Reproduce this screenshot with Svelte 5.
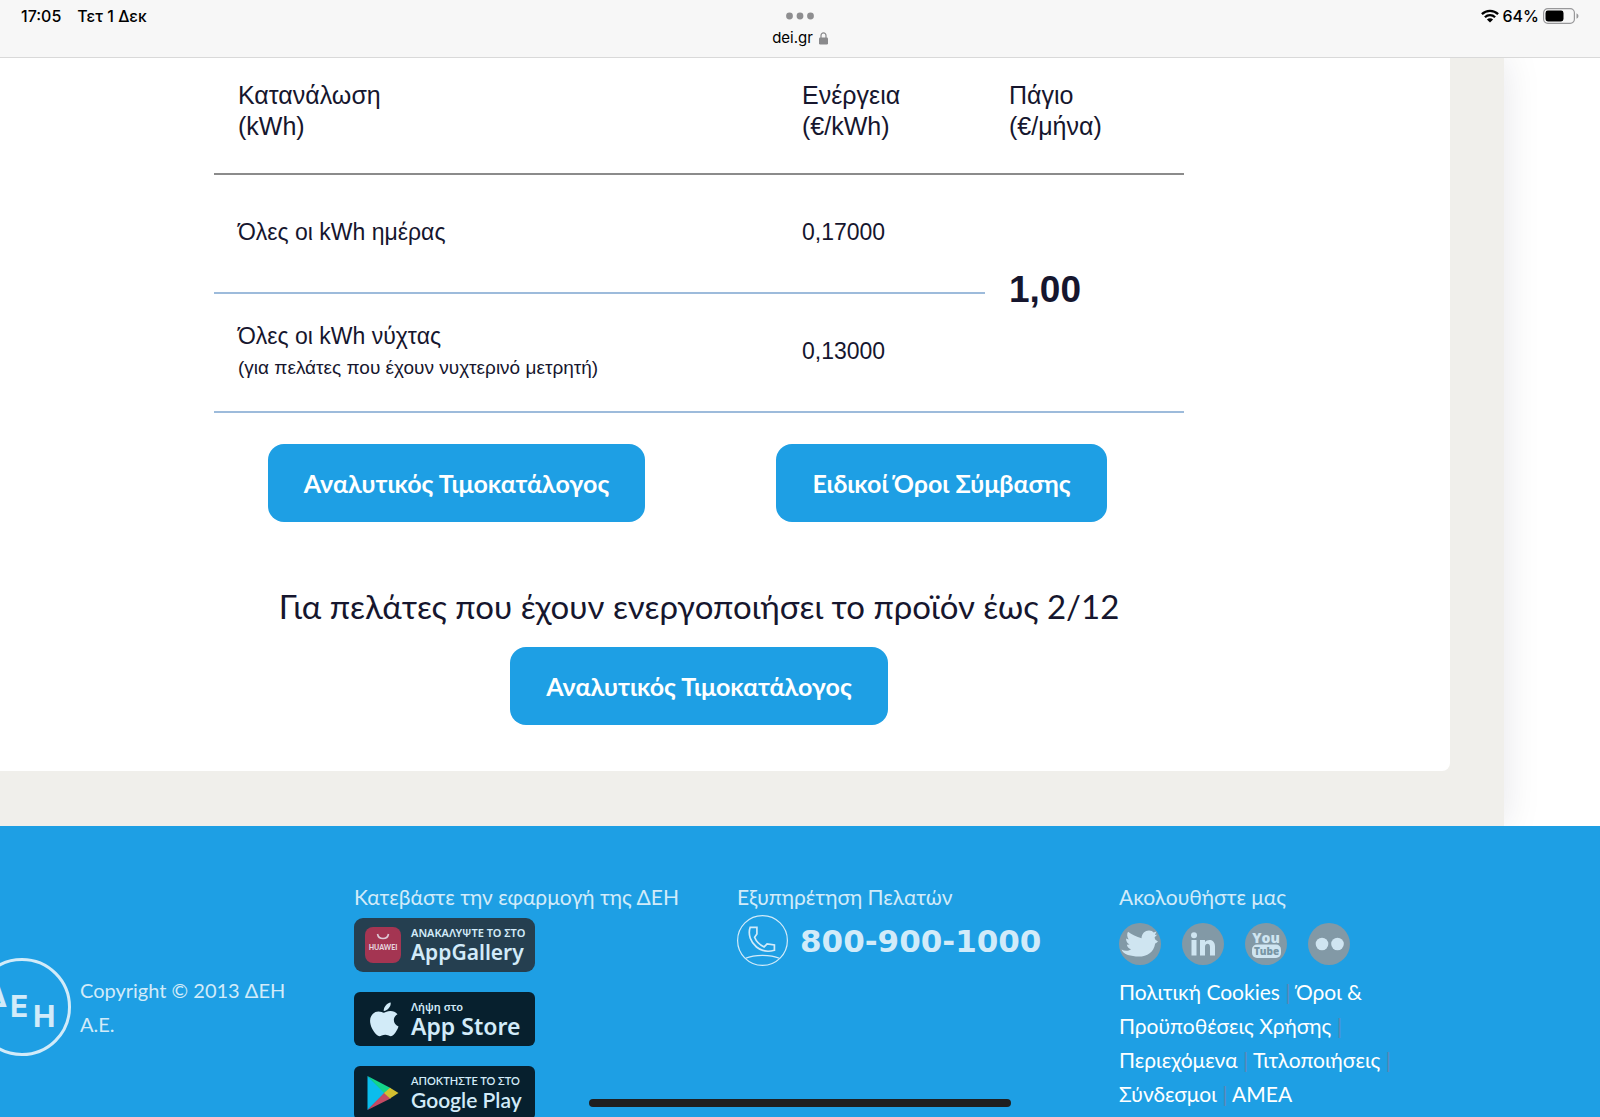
<script lang="ts">
	interface FooterLink {
		label: string;
		href: string;
	}

	const rates = [
		{ label: "Όλες οι kWh ημέρας", note: "", price: "0,17000" },
		{
			label: "Όλες οι kWh νύχτας",
			note: "(για πελάτες που έχουν νυχτερινό μετρητή)",
			price: "0,13000",
		},
	];

	const links: FooterLink[] = [
		{ label: "Πολιτική Cookies", href: "#cookies" },
		{ label: "Όροι & Προϋποθέσεις Χρήσης", href: "#terms" },
		{ label: "Περιεχόμενα", href: "#contents" },
		{ label: "Τιτλοποιήσεις", href: "#securitisation" },
		{ label: "Σύνδεσμοι", href: "#links" },
		{ label: "ΑΜΕΑ", href: "#accessibility" },
	];
</script>

<div class="screen">
	<header class="status-bar">
		<div class="clock">
			<span>17:05</span>
			<span>Τετ 1 Δεκ</span>
		</div>
		<div class="address">
			<svg class="dots" width="28" height="8" viewBox="0 0 28 8">
				<circle cx="3.5" cy="4" r="3.4" />
				<circle cx="14" cy="4" r="3.4" />
				<circle cx="24.5" cy="4" r="3.4" />
			</svg>
			<div class="host">
				<span>dei.gr</span>
				<svg width="9" height="13" viewBox="0 0 9 13">
					<path d="M2 6V3.4a2.5 2.5 0 0 1 5 0V6" fill="none" stroke="#8a8a8c" stroke-width="1.2" />
					<rect x="0" y="5.5" width="9" height="7" rx="1.2" fill="#8a8a8c" />
				</svg>
			</div>
		</div>
		<div class="indicators">
			<svg width="18" height="14" viewBox="0 0 18 14">
				<g fill="none" stroke="#000" stroke-width="2.3">
					<path d="M.9 5.1a11.6 11.6 0 0 1 16.2 0" />
					<path d="M3.9 8.3a7.3 7.3 0 0 1 10.2 0" />
				</g>
				<path d="M9 13.6 5.9 10.5a4.4 4.4 0 0 1 6.2 0z" />
			</svg>
			<span>64%</span>
			<svg width="36" height="16" viewBox="0 0 36 16">
				<rect x=".6" y=".6" width="30.8" height="14.8" rx="4.2" fill="none" stroke="#98989a" stroke-width="1.2" />
				<rect x="2.5" y="2.5" width="18" height="11" rx="2.4" />
				<path d="M33.5 5.2q2 .9 2 2.8t-2 2.8z" fill="#98989a" />
			</svg>
		</div>
	</header>

	<div class="page">
		<main class="sheet">
			<section class="card">
				<table>
					<thead>
						<tr>
							<th>Κατανάλωση<br />(kWh)</th>
							<th class="energy">Ενέργεια<br />(€/kWh)</th>
							<th class="fixed">Πάγιο<br />(€/μήνα)</th>
						</tr>
					</thead>
					<tbody>
						{#each rates as rate, i}
							<tr>
								<td>
									{rate.label}
									{#if rate.note}<small>{rate.note}</small>{/if}
								</td>
								<td>{rate.price}</td>
								{#if i === 0}
									<td class="total" rowspan={rates.length}>1,00</td>
								{/if}
							</tr>
						{/each}
					</tbody>
				</table>

				<div class="actions">
					<a class="btn" href="#pricelist">Αναλυτικός Τιμοκατάλογος</a>
					<a class="btn" href="#contract">Ειδικοί Όροι Σύμβασης</a>
				</div>

				<h2>Για πελάτες που έχουν ενεργοποιήσει το προϊόν έως 2/12</h2>
				<div class="previous">
					<a class="btn" href="#pricelist-old">Αναλυτικός Τιμοκατάλογος</a>
				</div>
			</section>
		</main>

		<footer>
			<div class="brand">
				<svg class="logo" width="100" height="100" viewBox="0 0 100 100">
					<circle cx="50" cy="50" r="47.5" fill="none" stroke="currentColor" stroke-width="3" />
					<g class="logo-text">
						<text x="13" y="50">Δ</text>
						<text x="38" y="60">Ε</text>
						<text x="61" y="70">Η</text>
					</g>
				</svg>
				<p>Copyright © 2013 ΔΕΗ Α.Ε.</p>
			</div>

			<div class="apps">
				<h3>Κατεβάστε την εφαρμογή της ΔΕΗ</h3>
				<a class="badge gallery" href="#appgallery">
					<svg width="36" height="36" viewBox="0 0 36 36">
						<rect width="36" height="36" rx="8" fill="#a43552" />
						<path d="M12.5 7a5.6 5.6 0 0 0 11 0" fill="none" stroke="#dfc9d5" stroke-width="1.6" />
						<text x="18" y="23" text-anchor="middle">HUAWEI</text>
					</svg>
					<span class="badge-text">
						<span class="small">ΑΝΑΚΑΛΥΨΤΕ ΤΟ ΣΤΟ</span>
						<span class="store">AppGallery</span>
					</span>
				</a>
				<a class="badge apple" href="#appstore">
					<svg width="36" height="36" viewBox="0 0 36 36">
						<g fill="#d2ebf8">
							<path d="M18.7 9.9c-.2-3.8 3.3-7.9 7-8.4.5 4-3 8.2-7 8.4z" />
							<path d="M32.5 13.2c-5.3 2.9-4.7 10.1 1 12.2-.9 2.7-2.7 6.1-4.9 8.4-1.5 1.6-3.2 1.6-4.9.8-2.5-1.2-4.5-1.2-7 0-1.9.9-3.5.8-5.1-.8C5.3 27.5 2.7 17.9 7.7 12.9c2.6-2.7 6.1-3.1 9-1.8 1.5.7 2.6.7 4.1 0 4.1-1.8 8.7-1.3 11.7 2.1z" />
						</g>
					</svg>
					<span class="badge-text">
						<span class="small">Λήψη στο</span>
						<span class="store">App Store</span>
					</span>
				</a>
				<a class="badge play" href="#googleplay">
					<svg width="36" height="36" viewBox="0 0 36 36">
						<path d="M2.5 1v34L20 18z" fill="#0bbdec" />
						<path d="M2.5 1 26 13.2 20 19z" fill="#14d58b" />
						<path d="M2.5 35 26 23.3 20 17z" fill="#c54a64" />
						<path d="m25 12.7 8.5 5.3-8.5 5.6L19 18z" fill="#d3bf30" />
					</svg>
					<span class="badge-text">
						<span class="small">ΑΠΟΚΤΗΣΤΕ ΤΟ ΣΤΟ</span>
						<span class="store">Google Play</span>
					</span>
				</a>
			</div>

			<div class="service">
				<h3>Εξυπηρέτηση Πελατών</h3>
				<a class="phone" href="tel:8009001000">
					<svg width="51" height="51" viewBox="0 0 51 51">
						<g fill="none" stroke="currentColor">
							<circle cx="25.5" cy="25.5" r="24.9" stroke-width="1.2" />
							<path d="M8.5 43.3c9-4 25-4 34 0" stroke-width="1.2" />
							<path d="M13.2 12.3h6.7V19l-2.3 3.3c1.4 3.6 5.4 7.8 9.5 9.6l3-2.9 7.3 1v5.3c-6 1.7-12.4 1.3-17.9-3.3C13.6 27 10.7 19.5 13.2 12.3z" stroke-width="1.7" />
						</g>
					</svg>
					<span>800-900-1000</span>
				</a>
			</div>

			<div class="follow">
				<h3>Ακολουθήστε μας</h3>
				<div class="social">
					<a href="#twitter" aria-label="Twitter">
						<svg width="42" height="42" viewBox="0 0 42 42">
							<circle cx="21" cy="21" r="21" />
							<path class="mark" d="M39 18.5c-1 1-2 1.5-2.8 1.9C34.8 28.9 28.5 33.5 19.5 33.5 12.5 33.5 4 31.5 2.5 26.5c3.2 1.6 6.8 1.7 9.5-.3-2.5-.7-3.7-2.2-4.2-4.4l2.8-.2c-2.2-1.3-3.5-3-3.6-6l2.7.8C8 14 7.7 11.2 9 8.8c3.8 3 8.5 5 13.5 6.500.3-4.800 3.500-7.800 7.500-7.800 2 0 3.700.800 4.700 2l2.800-.9-1.600 3.300 2.200-.2-2.500 2.500c.2 1.300.4 2 1.200 2.800z" />
						</svg>
					</a>
					<a href="#linkedin" aria-label="LinkedIn">
						<svg width="42" height="42" viewBox="0 0 42 42">
							<circle cx="21" cy="21" r="21" />
							<g class="mark">
								<circle cx="12" cy="12.3" r="3" />
								<path d="M9.5 17h5v15.5h-5zM18 17h5v2c2.5-3.2 10-3 10 4.5v9h-5V24c0-4.6-5-4-5 0v8.5h-5z" />
							</g>
						</svg>
					</a>
					<a href="#youtube" aria-label="YouTube">
						<svg width="42" height="42" viewBox="0 0 42 42">
							<circle cx="21" cy="21" r="21" />
							<rect class="mark" x="7" y="21.5" width="29" height="13.5" rx="5" />
							<text class="you" x="21" y="19.5" text-anchor="middle">You</text>
							<text class="tube" x="21.5" y="32" text-anchor="middle">Tube</text>
						</svg>
					</a>
					<a href="#flickr" aria-label="Flickr">
						<svg width="42" height="42" viewBox="0 0 42 42">
							<circle cx="21" cy="21" r="21" />
							<circle class="mark" cx="14" cy="21" r="6.3" />
							<circle class="mark" cx="29.5" cy="21" r="6.3" />
						</svg>
					</a>
				</div>
				<nav>
					{#each links as link, i}
						<a href={link.href}>{link.label}</a>{#if i < links.length - 1}<span class="sep">&nbsp;|</span>{/if}{" "}
					{/each}
				</nav>
			</div>
		</footer>
	</div>

	<div class="home-indicator"></div>
</div>

<style>
	:global(body) {
		background: #fff;
	}

	.screen {
		position: relative;
		display: flex;
		flex-direction: column;
		height: 100vh;
		overflow: hidden;
		font-family: Lato, "Open Sans", sans-serif;
		color: #16162e;
	}

	a {
		color: inherit;
		text-decoration: none;
	}

	svg {
		flex-shrink: 0;
	}

	.status-bar {
		display: grid;
		grid-template-columns: 1fr auto 1fr;
		flex-shrink: 0;
		height: 57px;
		padding: 0 21px;
		background: #f7f7f7;
		border-bottom: 1px solid #d9d9d9;
		font-family: Inter, sans-serif;
		font-size: 16px;
		font-weight: 500;
		line-height: 32px;
		color: #000;
	}

	.clock {
		display: flex;
		gap: 16px;
	}

	.address {
		display: flex;
		flex-direction: column;
		align-items: center;
		padding-top: 12px;
		font-weight: 400;
	}

	.dots {
		fill: #8e8e90;
	}

	.host {
		display: flex;
		align-items: center;
		gap: 6px;
		font-size: 15px;
		line-height: 36px;
	}

	.indicators {
		display: flex;
		align-items: center;
		justify-content: flex-end;
		gap: 4px;
		height: 32px;
	}

	.page {
		flex: 1;
		display: flex;
		flex-direction: column;
		min-height: 0;
		overflow: hidden;
	}

	.sheet {
		flex-shrink: 0;
		margin-right: 96px;
		padding: 0 54px 55px 0;
		background: #f0efeb;
		box-shadow: 0 0 36px rgba(20, 20, 50, 0.1);
	}

	.card {
		padding: 0 266px 46px 214px;
		background: #fff;
		border-bottom-right-radius: 8px;
	}

	table {
		width: 100%;
		border-collapse: collapse;
		font-family: "Liberation Sans", Arial, sans-serif;
		font-size: 23px;
		line-height: 31px;
	}

	th {
		padding: 22px 24px 31px;
		border-bottom: 2px solid #8b8b8b;
		font-size: 25px;
		font-weight: 400;
		text-align: left;
	}

	td {
		height: 115px;
		padding: 0 24px 2px;
		border-bottom: 2px solid #9dbbdb;
	}

	.energy {
		width: 159px;
	}

	.fixed {
		width: 151px;
	}

	small {
		display: block;
		font-size: 19px;
	}

	.total {
		padding-bottom: 8px;
		font-size: 37px;
		font-weight: 700;
	}

	.actions {
		display: grid;
		grid-template-columns: 1fr 1fr;
		justify-items: center;
		padding-top: 31px;
	}

	.btn {
		padding: 0 36px;
		border-radius: 16px;
		background: #1e9fe4;
		color: #fff;
		font-size: 25px;
		font-weight: 700;
		line-height: 78px;
		white-space: nowrap;
	}

	h2 {
		margin: 64px 0 21px;
		font-size: 33px;
		font-weight: 400;
		line-height: 40px;
		text-align: center;
	}

	.previous {
		display: flex;
		justify-content: center;
	}

	footer {
		position: relative;
		flex: 1 0 auto;
		display: grid;
		grid-template-columns: 354fr 383fr 382fr 481fr;
		padding-top: 54px;
		background: #1e9fe4;
		color: #d2ebf9;
		font-size: 21px;
		line-height: 34px;
	}

	.brand {
		display: flex;
		align-items: center;
		align-self: start;
		gap: 8px;
		margin: 77px 40px 0 -28px;
	}

	.brand p {
		margin: 0;
		font-size: 20px;
	}

	.logo-text {
		fill: currentColor;
		font-family: Inter, sans-serif;
		font-size: 30px;
		font-weight: 700;
	}

	h3 {
		margin: 0;
		font-size: 21px;
		font-weight: 400;
		white-space: nowrap;
	}

	.badge {
		display: flex;
		align-items: center;
		gap: 10px;
		box-sizing: border-box;
		width: 181px;
		height: 54px;
		margin: 4px 0 20px;
		padding: 0 11px;
		border-radius: 6px;
		background: #07202e;
	}

	.badge + .badge {
		margin-top: 0;
	}

	.gallery {
		background: #253f50;
		border-radius: 9px;
	}

	.gallery text {
		fill: #e6d3dd;
		font-size: 7px;
		font-weight: 900;
	}

	.badge-text {
		display: flex;
		flex-direction: column;
		font-family: "Noto Sans", sans-serif;
		white-space: nowrap;
	}

	.small {
		font-size: 11px;
		font-weight: 600;
		line-height: 14px;
	}

	.store {
		font-size: 21px;
		font-weight: 600;
		line-height: 24px;
	}

	.apple .store {
		font-size: 23px;
	}

	.play .badge-text {
		font-family: Lato, sans-serif;
	}

	.phone {
		display: flex;
		align-items: center;
		gap: 12px;
		margin-top: 1px;
		font-family: "DejaVu Sans", sans-serif;
		font-size: 31px;
		font-weight: 700;
	}

	.social {
		display: flex;
		gap: 21px;
		margin: 9px 0 10px;
	}

	.social a {
		display: flex;
	}

	.social svg {
		fill: #8299a6;
	}

	.social .mark {
		fill: #cfe5f1;
	}

	.you,
	.tube {
		font-family: "Open Sans", sans-serif;
		font-weight: 800;
	}

	.you {
		fill: #cfe5f1;
		font-size: 14px;
	}

	.tube {
		fill: #7795a4;
		font-size: 10px;
	}

	nav {
		max-width: 290px;
		color: #fff;
	}

	.sep {
		color: #5c87b4;
	}

	.home-indicator {
		position: absolute;
		bottom: 10px;
		left: 50%;
		width: 422px;
		height: 8px;
		margin-left: -211px;
		border-radius: 4px;
		background: #1f1f1f;
	}
</style>
